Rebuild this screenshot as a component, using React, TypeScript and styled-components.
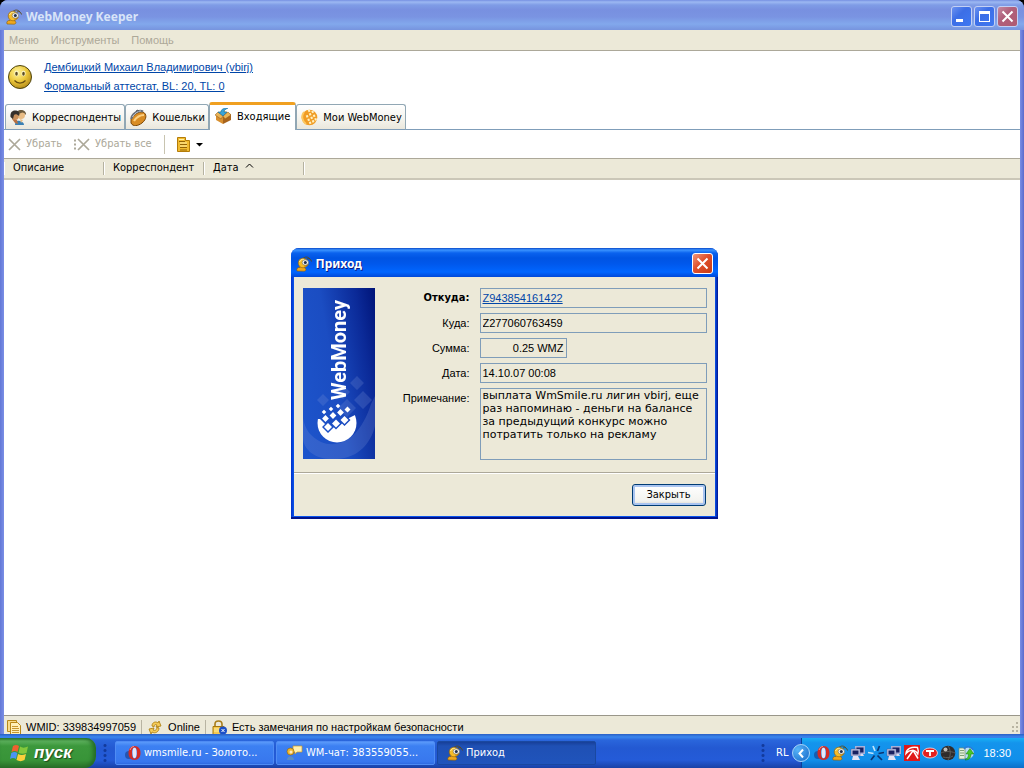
import React from "react";
import styled, { createGlobalStyle } from "styled-components";

const ui = '"DejaVu Sans Condensed", Tahoma, sans-serif';
const arial = '"Liberation Sans", Arial, sans-serif';
const wide = '"DejaVu Sans", Verdana, sans-serif';
const caption = '"Noto Sans", "Trebuchet MS", sans-serif';
const beige = "#ece9d8";
const link = "#0046a8";

const GlobalStyle = createGlobalStyle`
  * { box-sizing: border-box; }
  body { margin: 0; background: #000; font: 11px/14px ${ui}; color: #000; }
  button, input, textarea { font: inherit; color: inherit; margin: 0; border-radius: 0; }
  svg { display: block; flex: none; }
`;

const Desktop = styled.div`
  position: relative;
  display: flex;
  flex-direction: column;
  min-height: 100vh;
`;

/* ---------- main window ---------- */

const MainWindow = styled.main`
  flex: 1;
  display: flex;
  flex-direction: column;
  padding: 0 4px;
  border-radius: 8px 8px 0 0;
  background: linear-gradient(90deg, #6277d6, #7b8fe6 4px, #7b8fe6 calc(100% - 4px), #5a6bcc);
`;

const TitleBar = styled.header<{ $active?: boolean }>`
  display: flex;
  align-items: center;
  gap: 4px;
  height: ${p => (p.$active ? 29 : 30)}px;
  margin: 0 ${p => (p.$active ? -3 : -4)}px;
  padding: 3px ${p => (p.$active ? 5 : 6)}px 0;
  border-radius: 8px 8px 0 0;
  color: ${p => (p.$active ? "#fff" : "#d8e4f8")};
  text-shadow: ${p => (p.$active ? "1px 1px 0 #0a1883" : "none")};
  background: ${p =>
    p.$active
      ? "linear-gradient(#0a48c8, #3a93ff 2px, #0a62ee 5px, #0054e3 10px, #0058ec 16px, #0066ff 24px, #0048d8)"
      : "linear-gradient(#7690e2, #9cb8f2 2px, #7f9ce6 5px, #7890e0 10px, #7a94e2 17px, #82a8ec 24px, #7794de)"};
`;

const Title = styled.h1`
  flex: 1;
  margin: 0;
  font: bold 12px/16px ${caption};
`;

const CaptionButtons = styled.div`
  display: flex;
  gap: 2px;
`;

const CaptionButton = styled.button<{ $kind: "blue" | "faded" | "red" }>`
  display: grid;
  place-items: center;
  width: 21px;
  height: 21px;
  padding: 0;
  border: 1px solid ${p => (p.$kind === "red" ? "#fff" : "#c3d0f4")};
  border-radius: 3px;
  background: ${p =>
    p.$kind === "blue"
      ? "linear-gradient(135deg, #6c92f0, #3c6ee6 40%, #3e78f2)"
      : p.$kind === "faded"
      ? "linear-gradient(135deg, #c58ba2, #b0607c 40%, #b05a70)"
      : "linear-gradient(135deg, #f0987c, #e0502c 45%, #c83c14)"};
`;

const MenuBar = styled.nav`
  display: flex;
  align-items: center;
  height: 21px;
  padding-left: 5px;
  gap: 12px;
  font-family: ${arial};
  background: ${beige};
  border-bottom: 1px solid #aca899;
`;

const MenuItem = styled.button`
  padding: 0;
  border: 0;
  background: none;
  color: #aca899;
`;

const UserPanel = styled.section`
  display: flex;
  align-items: center;
  gap: 12px;
  height: 51px;
  padding-left: 4px;
  font-family: ${arial};
  background: #fff;
`;

const UserLinks = styled.div`
  display: flex;
  flex-direction: column;
  align-items: flex-start;
  gap: 5px;
`;

const TextLink = styled.a`
  color: ${link};
  text-decoration: underline;
`;

const Tabs = styled.div`
  display: flex;
  align-items: flex-end;
  height: 28px;
  padding-left: 1px;
  background: linear-gradient(#7f9db9, #7f9db9) bottom / 100% 1px no-repeat #fff;
`;

const Tab = styled.button<{ $active?: boolean }>`
  display: flex;
  align-items: center;
  gap: 5px;
  height: ${p => (p.$active ? 28 : 26)}px;
  padding: ${p => (p.$active ? "0 5px 2px" : "1px 3px 0 4px")};
  border: 1px solid #91a7b4;
  border-top: ${p => (p.$active ? "3px solid #f0a020" : "1px solid #91a7b4")};
  border-bottom: ${p => (p.$active ? "0" : "1px solid #7f9db9")};
  border-radius: 3px 3px 0 0;
  background: ${p => (p.$active ? "#fff" : "linear-gradient(#fff, #f4f3ec 60%, #eae7dc)")};
  white-space: nowrap;
`;

const Toolbar = styled.div`
  display: flex;
  align-items: center;
  gap: 12px;
  height: 28px;
  padding: 0 4px 0;
  background: #fff;
`;

const ToolButton = styled.button`
  display: flex;
  align-items: center;
  gap: 5px;
  padding: 0;
  border: 0;
  background: none;
  color: #aca899;
`;

const ToolSeparator = styled.i`
  width: 1px;
  height: 19px;
  background: #c8c4b0;
`;

const ListArea = styled.section`
  flex: 1;
  background: #fff;
`;

const List = styled.table`
  width: 100%;
  border-collapse: collapse;
  table-layout: fixed;
`;

const HeadCell = styled.th<{ $rest?: boolean }>`
  width: ${p => (p.$rest ? "auto" : "100px")};
  height: 20px;
  padding: 0 0 0 9px;
  font-weight: normal;
  text-align: left;
  white-space: nowrap;
  border-top: 1px solid #aca899;
  border-bottom: 2px solid #cbc7b8;
  background: ${p =>
    p.$rest
      ? `linear-gradient(#fff, #fff) left center / 1px 13px no-repeat, ${beige}`
      : `linear-gradient(#fff, #fff) left center / 1px 13px no-repeat, linear-gradient(#b5b2a0, #b5b2a0) right center / 1px 13px no-repeat, ${beige}`};
  svg { display: inline-block; margin-left: 6px; vertical-align: 3px; }
`;

const StatusBar = styled.footer`
  display: flex;
  align-items: center;
  height: 19px;
  padding: 4px 0 0 3px;
  font-family: ${arial};
  background: ${beige};
  border-top: 1px solid #9a978a;
`;

const StatusCell = styled.div<{ $last?: boolean }>`
  flex: ${p => (p.$last ? "1" : "none")};
  display: flex;
  align-items: center;
  gap: 5px;
  height: 14px;
  margin-right: 6px;
  padding-right: 5px;
  border-right: ${p => (p.$last ? "0" : "1px solid #b8b4a2")};
`;

/* ---------- dialog ---------- */

const DialogLayer = styled.div`
  position: absolute;
  inset: 0;
  display: grid;
  place-items: center;
  padding: 0 16px 2px 0;
`;

const Dialog = styled.section`
  width: 427px;
  padding: 0 3px 3px;
  border-radius: 8px 8px 0 0;
  background: linear-gradient(90deg, #0030c8, #0a55ee 3px, #0a55ee calc(100% - 3px), #00138c);
  box-shadow: inset 0 -2px 0 #00138c;
`;

const DialogBody = styled.div`
  display: flex;
  align-items: flex-start;
  gap: 20px;
  padding: 11px 8px 12px 9px;
  background: ${beige};
`;

const Banner = styled.div`
  position: relative;
  flex: none;
  width: 72px;
  height: 171px;
  overflow: hidden;
  background: linear-gradient(80deg, #1d55cc, #1b4dc2 45%, #0b2a98 80%, #001478);
`;

const BannerName = styled.span`
  position: absolute;
  top: 12px;
  left: 20px;
  writing-mode: vertical-rl;
  rotate: 180deg;
  color: #fff;
  font: bold 20px/32px Roboto, sans-serif;
`;

const Form = styled.form`
  flex: 1;
  display: grid;
  grid-template-columns: 75px 1fr;
  gap: 5px 10px;
  font-family: ${arial};
`;

const FieldLabel = styled.label<{ $strong?: boolean }>`
  padding-top: 3px;
  text-align: right;
  font-weight: ${p => (p.$strong ? "bold" : "normal")};
  font-family: ${p => (p.$strong ? ui : arial)};
`;

const LinkField = styled.div`
  height: 20px;
  padding: 2px;
  border: 1px solid #7f9db9;
`;

const Field = styled.input<{ $short?: boolean }>`
  width: ${p => (p.$short ? "87px" : "100%")};
  height: 20px;
  padding: 0 2px;
  border: 1px solid #7f9db9;
  background: none;
  text-align: ${p => (p.$short ? "right" : "left")};
`;

const Note = styled.textarea`
  width: 100%;
  height: 72px;
  padding: 0 0 0 2px;
  border: 1px solid #7f9db9;
  background: none;
  resize: none;
  overflow: hidden;
  && { font: 11px/13px ${wide}; }
`;

const DialogActions = styled.div`
  display: flex;
  justify-content: flex-end;
  padding: 11px 9px 10px;
  background: ${beige};
  border-top: 1px solid #aca899;
  box-shadow: inset 0 1px 0 #fff;
`;

const PushButton = styled.button`
  width: 74px;
  height: 22px;
  padding: 0;
  border: 1px solid #003c74;
  border-radius: 3px;
  background: linear-gradient(#fff, #f3f3ef 80%, #dcd8cc);
  box-shadow: inset 0 0 0 2px #a9c4f0;
`;

/* ---------- taskbar ---------- */

const Taskbar = styled.footer`
  display: flex;
  align-items: stretch;
  height: 34px;
  color: #fff;
  background: linear-gradient(#2a5fc4, #3a86ee 3px, #2a66dc 6px, #2359d2 14px, #245bd8 26px, #1941a5);
`;

const StartButton = styled.button`
  display: flex;
  align-items: center;
  gap: 5px;
  width: 96px;
  margin-top: 4px;
  padding: 0 0 1px 10px;
  border: 0;
  border-radius: 0 10px 12px 0;
  color: #fff;
  text-shadow: 1px 1px 1px #1c4a1c;
  background: linear-gradient(#2f7a30, #5cb05c 3px, #3c983c 8px, #389438 22px, #2a7028);
  box-shadow: inset -3px 0 4px #246a26;
  && { font: italic bold 17px/20px ${arial}; }
`;

const Grip = styled.i`
  width: 6px;
  margin: 9px 7px 4px 6px;
  background: radial-gradient(circle, #123a9c 1px, transparent 2px) 0 0 / 6px 5px;
`;

const TaskList = styled.div`
  flex: 1;
  display: flex;
  gap: 2px;
  padding: 7px 0 3px;
`;

const TaskButton = styled.button<{ $active?: boolean }>`
  display: flex;
  align-items: center;
  gap: 3px;
  width: 159px;
  padding: 0 9px;
  border: 1px solid ${p => (p.$active ? "#1a48a0" : "#4f8cf4")};
  border-radius: 2px;
  color: #fff;
  white-space: nowrap;
  background: ${p => (p.$active ? "linear-gradient(#173f98, #1f50b4 4px, #2054bc)" : "linear-gradient(#5a9afa, #3c80f2 4px, #3877ee 20px, #2f6ae0)")};
`;

const Language = styled.span`
  align-self: center;
  padding: 4px 4px 0 3px;
`;

const Tray = styled.div`
  display: flex;
  align-items: center;
  gap: 2px;
  margin-top: 4px;
  padding-right: 13px;
  background: linear-gradient(#0c3f98, #0c3f98) 9px 0 / 1px 100% no-repeat,
    linear-gradient(#18b0f4, #1494ec 5px, #118fea 22px, #0d6fc8) 10px 0 no-repeat;
`;

const TrayArrow = styled.button`
  display: grid;
  place-items: center;
  width: 18px;
  height: 18px;
  margin-right: 2px;
  padding: 0;
  border: 1px solid #a8d4f8;
  border-radius: 50%;
  background: radial-gradient(circle at 30% 30%, #58b4f8, #1468c8);
`;

const Clock = styled.time`
  margin-left: 7px;
  font-family: ${arial};
`;

/* ---------- icons ---------- */

const Ant = ({ size = 16 }: { size?: number }) => (
  <svg width={size} height={size} viewBox="0 0 16 16">
    <path d="M7 2.500C9 .5 12 .5 14 3M11 3c2-1 4 0 4.500 2.500" fill="none" stroke="#5a4a18" strokeWidth=".9" />
    <path d="M1 15c-.8-2.500.8-3.800 3-3.500L5.500 10h3v2c2 .5 2 3-.5 3.200z" fill="#f0a81c" stroke="#8a5a08" strokeWidth=".6" />
    <circle cx="7" cy="7" r="4.800" fill="#f6bc28" stroke="#8a5a08" strokeWidth=".6" />
    <path d="M3.500 6c.6-2 2.500-3 4.500-2.600" stroke="#fff0a0" fill="none" />
    <ellipse cx="9.300" cy="6.500" rx="3.200" ry="2.700" fill="#f4f4f0" stroke="#6c6850" strokeWidth=".6" />
    <circle cx="9.300" cy="6.600" r="1.500" fill="#203050" />
    <path d="M8 10c2 0 3.500-.5 4.500-1.500" stroke="#b87808" fill="none" strokeWidth=".8" />
  </svg>
);

const Smiley = () => (
  <svg width="24" height="24" viewBox="0 0 24 24">
    <defs>
      <radialGradient id="face" cx=".4" cy=".3" r=".8">
        <stop offset="0" stopColor="#fff6a0" /><stop offset=".5" stopColor="#ecc83c" /><stop offset="1" stopColor="#a87c10" />
      </radialGradient>
    </defs>
    <circle cx="12" cy="12" r="11.500" fill="url(#face)" stroke="#4c4410" />
    <ellipse cx="8.500" cy="8.500" rx="2" ry="2.800" fill="#fffbd0" /><ellipse cx="15.500" cy="8.500" rx="2" ry="2.800" fill="#fffbd0" />
    <ellipse cx="8.500" cy="8.800" rx="1.300" ry="2" fill="#5c4c20" /><ellipse cx="15.500" cy="8.800" rx="1.300" ry="2" fill="#5c4c20" />
    <path d="M6.500 15.500c3 3.500 8 3.500 11 0" fill="none" stroke="#6a5010" strokeWidth="1.200" />
  </svg>
);

const PeopleIcon = () => (
  <svg width="17" height="17" viewBox="0 0 17 17">
    <path d="M5 16c0-4 2-5 5-4s4 2 4 4z" fill="#3a80b4" />
    <circle cx="11" cy="6" r="4" fill="#e8bc84" /><path d="M6.500 6C6 2 9 .5 12 1s4.500 3 4 5c-2-3-4-3-5-2z" fill="#6a5a3c" />
    <circle cx="5" cy="7.500" r="3.500" fill="#c8905c" /><path d="M.5 8C0 3 2.500 1 6 1.500S10 5 9 7C7 5 5 5 4 6l-1 4z" fill="#34302c" />
    <path d="M2 10l5 1 1 4-3-1z" fill="#b87040" /><path d="M10 10l3 1-2 3z" fill="#e8bc84" />
  </svg>
);

const PurseIcon = () => (
  <svg width="17" height="17" viewBox="0 0 17 17">
    <path d="M1 11c0-4 8-9 12-8 4 2 4 7-1 11-4 3-9 4-11 0z" fill="#d88c24" stroke="#7c4808" />
    <path d="M4 12c2-3 6-6 10-6" stroke="#fcd080" strokeWidth="2.200" fill="none" />
    <path d="M1.500 10C1 6 8 0 13 2.500" fill="none" stroke="#68707c" strokeWidth="2.200" /><path d="M2.500 8C4 5 8 2 11 2" fill="none" stroke="#d8e0e8" strokeWidth=".8" />
    <path d="M6 3l1-2 2 1" stroke="#505860" fill="none" />
  </svg>
);

const BoxIcon = () => (
  <svg width="17" height="17" viewBox="0 0 17 17">
    <path d="M1 6l7 3v7l-7-4z" fill="#d89030" /><path d="M8 9l8-3v6l-8 4z" fill="#a8641c" />
    <path d="M1 6l7-4 8 4-8 3z" fill="#f4cc80" /><path d="M0 7l3-3 5 4-2 3zM16 7l-3-3-5 4 2 3z" fill="#eab458" stroke="#8c5414" strokeWidth=".5" />
    <path d="M13 0C9 0 6 1 6 4H3l5 4 4-4H9c0-2 2-3 4-4z" fill="#38a4d8" stroke="#186c9c" strokeWidth=".6" />
  </svg>
);

const OrangeGlobe = () => (
  <svg width="17" height="17" viewBox="0 0 17 17">
    <circle cx="8.500" cy="8.500" r="7.800" fill="#f09c24" />
    <path d="M3 3c-3 4-2 9 2 12" stroke="#fcc860" fill="none" strokeWidth="2" />
    <g fill="#fff0c0">
      {[[6, 7.500], [7.500, 11], [9, 14], [9, 5.500], [10.500, 9], [12, 12.500], [8, 2], [11.500, 3], [13, 7], [14.500, 10.500]].map(([x, y]) => (
        <path key={`${x}-${y}`} d={`M${x - 1.200} ${y - 0.900}l2-.6.700 2-2 .7z`} />
      ))}
    </g>
  </svg>
);

const Cross = ({ dots }: { dots?: boolean }) => (
  <svg width={dots ? 16 : 13} height="13" viewBox={dots ? "-3 0 16 13" : "0 0 13 13"} fill="none" stroke="#aca899">
    <path d="M1 1l11 11M12 1L1 12" strokeWidth="1.700" />
    {dots && <path d="M-3 2.500h3M-3 6.500h3M-3 10.500h3" strokeDasharray="2 1" strokeWidth="2" />}
  </svg>
);

const FilterIcon = () => (
  <svg width="13" height="15" viewBox="0 0 13 15">
    <path d="M.5.500h8v3h4v11H.5z" fill="#f2bc30" stroke="#b47c08" />
    <path d="M2 4.500h6M3 7.500h7M3 10.500h7M3 13h7" stroke="#946404" /><path d="M2 2.500h5M3 9h7M3 6h7" stroke="#fff0a8" />
  </svg>
);

const DocsIcon = () => (
  <svg width="14" height="15" viewBox="0 0 14 15">
    <path d="M.5.500h9v11h-9z" fill="#f8dc8c" stroke="#b88818" /><path d="M3.500 2.500h7l3 3v9h-10z" fill="#fff0b8" stroke="#b88818" />
    <path d="M5 6.500h6M5 8.500h7M5 10.500h7M5 12.500h7" stroke="#c89830" />
  </svg>
);

const SyncIcon = () => (
  <svg width="15" height="15" viewBox="0 0 15 15" fill="#f6cc58" stroke="#a87808" strokeWidth=".8">
    <path d="M4 6c0-4 4-5 6-3l1-2 2 5-5 1 1-2C7 4 6 5 6 7z" /><path d="M11 8c0 4-4 6-7 4l-1 2-2-5 5-1-1 2c2 1 4 0 4-3z" />
  </svg>
);

const LockIcon = () => (
  <svg width="15" height="15" viewBox="0 0 15 15">
    <path d="M3 7V4c0-4 7-4 7 0v3" fill="none" stroke="#a87c18" strokeWidth="1.600" />
    <path d="M1 6.500h11v8H1z" fill="#f4c850" stroke="#a87808" /><path d="M2 9h6M2 11h5" stroke="#fff0a0" />
    <circle cx="11" cy="10.500" r="4" fill="#1c50c8" /><path d="M9.500 9l3 3m0-3l-3 3" stroke="#fff" />
  </svg>
);

const WindowsFlag = () => (
  <svg width="19" height="18" viewBox="0 0 19 18">
    <path d="M3 2c2-1.500 4-1.500 6 0L7.500 8c-2-1.500-4-1-6 0z" fill="#f06030" />
    <path d="M10 2.500c2 1.500 5 1.500 8 0L16.500 9c-3 1-5 1-8 0z" fill="#84c83c" />
    <path d="M1.300 9c2-1.300 4-1.300 6 0L6 15c-2-1.300-4-1.300-6 0z" fill="#4c94f4" />
    <path d="M8 10c3 1.500 5 1 8 0l-1.500 6c-3 1.500-5 1.500-8 0z" fill="#fcd03c" />
  </svg>
);

const OperaIcon = () => (
  <svg width="16" height="16" viewBox="0 0 16 16">
    <ellipse cx="4" cy="10" rx="4" ry="4" fill="#183c88" opacity=".6" />
    <path fillRule="evenodd" d="M9.500 1c4 0 6 3 6 7s-2 7-6 7-6-3-6-7 2-7 6-7zm0 1.500C7.500 2.500 7 5 7 8s.5 5.500 2.500 5.500S12 11 12 8s-.5-5.500-2.500-5.500z" fill="#d42c24" />
    <ellipse cx="9.500" cy="8" rx="2.100" ry="5.200" fill="#e8e8f8" />
    <path d="M5 5c1-3 3-3.500 4-3.500" stroke="#f89088" fill="none" />
  </svg>
);

const ChatIcon = () => (
  <svg width="17" height="16" viewBox="0 0 17 16">
    <path d="M7 1h9v6h-5l-2 2V7H7z" fill="#fff0b0" stroke="#c89828" strokeWidth=".7" />
    <path d="M1 15c0-5 7-5 7 0z" fill="#5c8cc4" /><circle cx="4.500" cy="6.500" r="3.500" fill="#f0b830" stroke="#8c5c08" strokeWidth=".6" /><circle cx="5" cy="7" r="1.500" fill="#ffe8c0" />
  </svg>
);

const NetworkIcon = () => (
  <svg width="16" height="16" viewBox="0 0 16 16">
    <path d="M5 1h10v8H5z" fill="#a8b0d8" /><path d="M6.500 2.500h7v5h-7z" fill="#182060" /><path d="M9 9h4l1 2H8z" fill="#d8dcf0" />
    <path d="M1 4h9v7H1z" fill="#c4c8e4" stroke="#505890" strokeWidth=".5" /><path d="M2.500 5.500h6v4h-6z" fill="#182060" /><path d="M3 11h5l2 4H2z" fill="#e4e4f4" />
  </svg>
);

const StarIcon = () => (
  <svg width="16" height="16" viewBox="0 0 16 16" fill="none" stroke="#0c3470" strokeWidth="1.700">
    <path d="M9.500 6l2-5M10.500 8.500l5.500-1M9.500 10.500l4.500 4.500M6.500 10.500L3 15" /><path d="M7 6L5 1M5.500 8.500L0 7.500" stroke="#c0e4fc" />
  </svg>
);

const AviraIcon = () => (
  <svg width="16" height="16" viewBox="0 0 16 16">
    <path d="M0 0h16v16H0z" fill="#e01818" />
    <path d="M2 8.500C2.500 4 7 1.500 13.500 2.500c.8 2 1 4 .3 6.500-1-2-2.300-3.300-4-3.500C7 5 4 6 2 8.500z" fill="none" stroke="#fff" strokeWidth="1.400" />
    <path d="M9.500 5L3 14M9.500 6l4.500 7.500" stroke="#fff" strokeWidth="1.500" />
  </svg>
);

const RedOval = () => (
  <svg width="16" height="16" viewBox="0 0 16 16">
    <ellipse cx="8" cy="8" rx="7.500" ry="5" fill="#e42020" stroke="#fce0e0" strokeWidth=".8" /><path d="M4 6h8M8 6v5" stroke="#fff" strokeWidth="1.800" />
  </svg>
);

const DarkBall = () => (
  <svg width="16" height="16" viewBox="0 0 16 16">
    <circle cx="8" cy="8" r="7.300" fill="#302c2c" />
    <path d="M1 8c4-2 10-2 14 0M8 1c3 4 3 10 0 14M3 12c3 1 7 1 10-1" stroke="#605c58" fill="none" />
    <circle cx="5.500" cy="4.500" r="2" fill="#c0bcb8" />
  </svg>
);

const UpdateIcon = () => (
  <svg width="16" height="16" viewBox="0 0 16 16">
    <circle cx="10" cy="8" r="5.800" fill="#b8dcf8" /><path d="M1 3h6v11H1z" fill="#e4f0d8" stroke="#708868" strokeWidth=".7" /><path d="M2 5.500h4M2 8h4M2 10.500h4" stroke="#80a078" />
    <path d="M7 15c5 0 6-3 6-6h2.800L12 3.500 8 9h2.500c0 3-1 4-3.500 6z" fill="#48c828" stroke="#187808" strokeWidth=".5" />
    <path d="M6 4c2-3 7-3 9 1" stroke="#2c7cd8" strokeWidth="1.500" fill="none" />
  </svg>
);

const diamond = (x: number, y: number, r: number) => `M${x} ${y - r}L${x + r} ${y}L${x} ${y + r}L${x - r} ${y}Z`;

const BannerArt = () => (
  <svg width="72" height="171" viewBox="0 0 72 171">
    <defs>
      <mask id="disc">
        <circle cx="34" cy="135" r="19.500" fill="#fff" />
        <path d="M0 110v21h17l8 8 17-7 10-5h20v-17z" />
        <path d={diamond(25, 139, 6) + diamond(33, 135.5, 6) + diamond(41.5, 132, 6)} />
      </mask>
    </defs>
    <g fill="#7c94d8" opacity=".24">
      <path d="M0 130c2 12 8 19 18 24 20 8 40-6 50-38l4-8v30c-5 20-20 35-46 33C10 170 0 160 0 150z" />
      <path d={diamond(54, 95, 7) + diamond(40, 104, 7) + diamond(60, 112, 9) + diamond(44, 120, 9) + diamond(20, 112, 6)} />
    </g>
    <path d="M10 112h48v46H10z" fill="#fff" mask="url(#disc)" />
    <g fill="#fff">
      <path d={diamond(25, 139, 4) + diamond(33, 135.5, 4) + diamond(41.5, 132, 4)} />
      <path d={diamond(22.5, 130.5, 3.4) + diamond(30, 127.5, 3.4) + diamond(37.5, 124.5, 3.4) + diamond(44.5, 121.5, 3)} />
      <path d={diamond(21, 124, 2.3) + diamond(28, 121, 2.3) + diamond(35, 118, 2.3)} />
    </g>
  </svg>
);

const CloseMark = () => (
  <svg width="13" height="13" viewBox="0 0 13 13" stroke="#fff" strokeWidth="2"><path d="M1.500 1.500l10 10M11.500 1.500l-10 10" /></svg>
);

export default function App() {
  return (
    <Desktop>
      <GlobalStyle />
      <MainWindow>
        <TitleBar>
          <Ant />
          <Title>WebMoney Keeper</Title>
          <CaptionButtons>
            <CaptionButton $kind="blue" aria-label="Свернуть">
              <svg width="13" height="13" viewBox="0 0 13 13"><path d="M1 9h7v3H1z" fill="#fff" /></svg>
            </CaptionButton>
            <CaptionButton $kind="blue" aria-label="Развернуть">
              <svg width="13" height="13" viewBox="0 0 13 13"><path d="M1 1h11v11H1zm1 3v7h9V4z" fill="#fff" fillRule="evenodd" /></svg>
            </CaptionButton>
            <CaptionButton $kind="faded" aria-label="Закрыть окно"><CloseMark /></CaptionButton>
          </CaptionButtons>
        </TitleBar>

        <MenuBar>
          <MenuItem>Меню</MenuItem>
          <MenuItem>Инструменты</MenuItem>
          <MenuItem>Помощь</MenuItem>
        </MenuBar>

        <UserPanel>
          <Smiley />
          <UserLinks>
            <TextLink href="#user">Дембицкий Михаил Владимирович (vbirj)</TextLink>
            <TextLink href="#passport">Формальный аттестат, BL: 20, TL: 0</TextLink>
          </UserLinks>
        </UserPanel>

        <Tabs role="tablist">
          <Tab role="tab"><PeopleIcon />Корреспонденты</Tab>
          <Tab role="tab"><PurseIcon />Кошельки</Tab>
          <Tab role="tab" aria-selected $active><BoxIcon />Входящие</Tab>
          <Tab role="tab"><OrangeGlobe />Мои WebMoney</Tab>
        </Tabs>

        <Toolbar>
          <ToolButton><Cross />Убрать</ToolButton>
          <ToolButton><Cross dots />Убрать все</ToolButton>
          <ToolSeparator />
          <ToolButton aria-label="Фильтр">
            <FilterIcon />
            <svg width="9" height="5" viewBox="0 0 9 5"><path d="M1 1h7L4.500 4.500z" fill="#000" /></svg>
          </ToolButton>
        </Toolbar>

        <ListArea>
          <List>
            <thead>
              <tr>
                <HeadCell>Описание</HeadCell>
                <HeadCell>Корреспондент</HeadCell>
                <HeadCell>
                  Дата
                  <svg width="9" height="5" viewBox="0 0 9 5"><path d="M1 4.500l3.500-3.500L8 4.500" fill="none" stroke="#000" /></svg>
                </HeadCell>
                <HeadCell $rest />
              </tr>
            </thead>
          </List>
        </ListArea>

        <StatusBar>
          <StatusCell><DocsIcon />WMID: 339834997059</StatusCell>
          <StatusCell><SyncIcon />Online</StatusCell>
          <StatusCell $last><LockIcon />Есть замечания по настройкам безопасности</StatusCell>
          <svg width="10" height="10" viewBox="0 0 10 10"><path d="M6 0h2v2H6zM6 4h2v2H6zM2 4h2v2H2zM6 8h2v2H6zM2 8h2v2H2z" fill="#b8b4a2" /></svg>
        </StatusBar>
      </MainWindow>

      <Taskbar>
        <StartButton><WindowsFlag />пуск</StartButton>
        <Grip />
        <TaskList>
          <TaskButton><OperaIcon />wmsmile.ru - Золото...</TaskButton>
          <TaskButton><ChatIcon />WM-чат: 383559055...</TaskButton>
          <TaskButton $active><Ant />Приход</TaskButton>
        </TaskList>
        <Grip />
        <Language>RL</Language>
        <Tray>
          <TrayArrow aria-label="Показать значки">
            <svg width="9" height="9" viewBox="0 0 9 9"><path d="M6 .5L2.500 4.500 6 8.500" fill="none" stroke="#fff" strokeWidth="2" /></svg>
          </TrayArrow>
          <OperaIcon /><Ant /><NetworkIcon /><StarIcon /><NetworkIcon /><AviraIcon /><RedOval /><DarkBall /><UpdateIcon />
          <Clock>18:30</Clock>
        </Tray>
      </Taskbar>

      <DialogLayer>
        <Dialog role="dialog" aria-label="Приход">
          <TitleBar $active>
            <Ant />
            <Title as="h2">Приход</Title>
            <CaptionButton $kind="red" aria-label="Закрыть диалог"><CloseMark /></CaptionButton>
          </TitleBar>
          <DialogBody>
            <Banner>
              <BannerArt />
              <BannerName>WebMoney</BannerName>
            </Banner>
            <Form>
              <FieldLabel as="span" $strong>Откуда:</FieldLabel>
              <LinkField><TextLink href="#purse">Z943854161422</TextLink></LinkField>
              <FieldLabel htmlFor="to">Куда:</FieldLabel>
              <Field id="to" readOnly value="Z277060763459" />
              <FieldLabel htmlFor="sum">Сумма:</FieldLabel>
              <Field id="sum" readOnly $short value="0.25 WMZ" />
              <FieldLabel htmlFor="date">Дата:</FieldLabel>
              <Field id="date" readOnly value="14.10.07 00:08" />
              <FieldLabel htmlFor="note">Примечание:</FieldLabel>
              <Note
                id="note"
                readOnly
                value="выплата WmSmile.ru лигин vbirj, еще раз напоминаю - деньги на балансе за предыдущий конкурс можно потратить только на рекламу"
              />
            </Form>
          </DialogBody>
          <DialogActions>
            <PushButton>Закрыть</PushButton>
          </DialogActions>
        </Dialog>
      </DialogLayer>
    </Desktop>
  );
}
